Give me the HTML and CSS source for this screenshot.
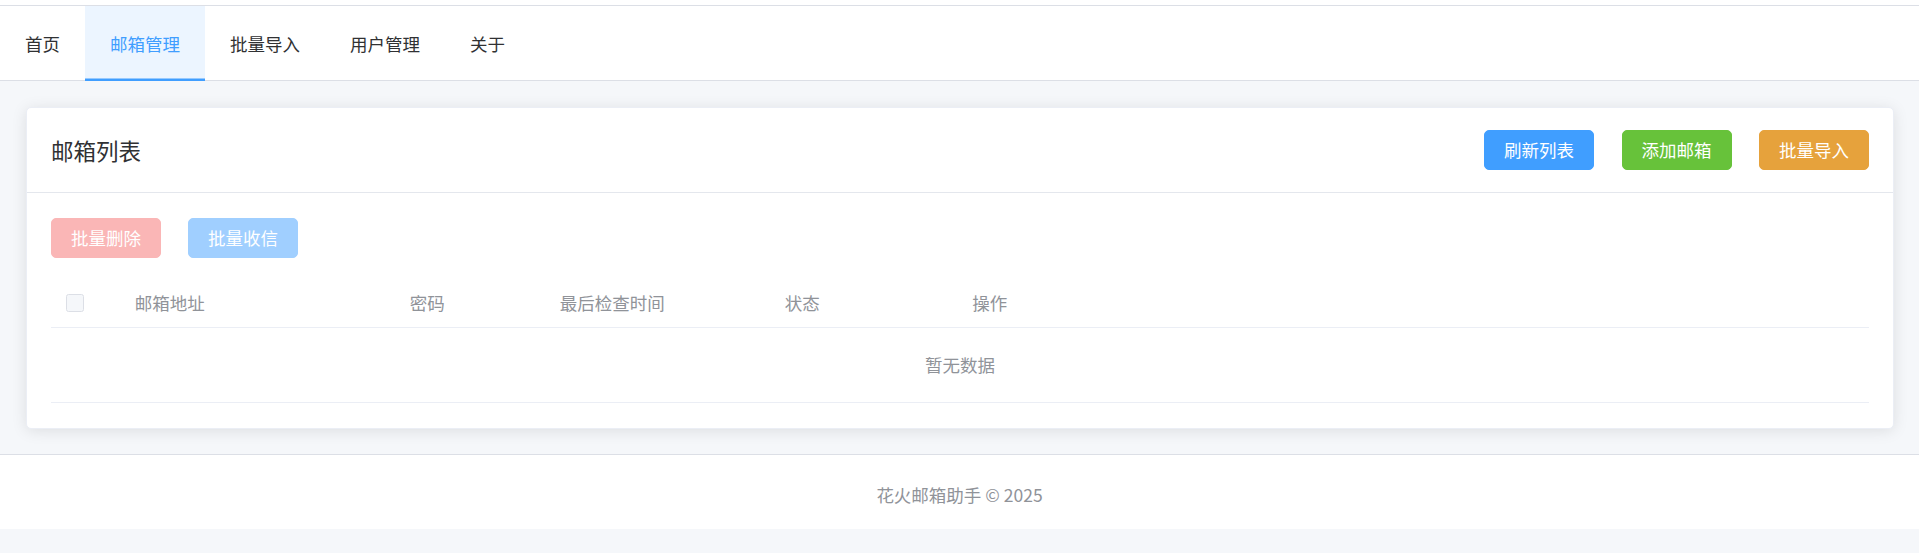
FILE: index.html
```html
<!DOCTYPE html>
<html lang="zh-CN">
<head>
<meta charset="utf-8">
<title>花火邮箱助手</title>
<link rel="stylesheet" href="styles.css">
</head>
<body>
<header class="topbar">
  <nav class="nav">
    <a class="nav-item">首页</a>
    <a class="nav-item active">邮箱管理</a>
    <a class="nav-item">批量导入</a>
    <a class="nav-item">用户管理</a>
    <a class="nav-item">关于</a>
  </nav>
</header>
<main class="main">
  <section class="card">
    <div class="card-header">
      <span class="card-title">邮箱列表</span>
      <div class="btn-group">
        <button class="btn btn-primary">刷新列表</button>
        <button class="btn btn-success">添加邮箱</button>
        <button class="btn btn-warning">批量导入</button>
      </div>
    </div>
    <div class="card-body">
      <div class="btn-group">
        <button class="btn btn-danger-disabled">批量删除</button>
        <button class="btn btn-primary-disabled">批量收信</button>
      </div>
      <div class="table">
        <div class="table-head">
          <div class="cell"><span class="checkbox"></span></div>
          <div class="cell">邮箱地址</div>
          <div class="cell">密码</div>
          <div class="cell">最后检查时间</div>
          <div class="cell">状态</div>
          <div class="cell">操作</div>
        </div>
        <div class="table-empty">暂无数据</div>
      </div>
    </div>
  </section>
</main>
<footer class="footer">花火邮箱助手 © 2025</footer>
</body>
</html>
```

FILE: styles.css
```css
html, body {
  margin: 0;
  padding: 0;
}
body {
  background: #f5f7fa;
  font-family: "Noto Sans CJK SC", "Microsoft YaHei", sans-serif;
  color: #303133;
}
.topbar {
  background: #fff;
  padding-top: 5px;
}
.nav {
  display: flex;
  height: 76px;
  box-sizing: border-box;
  border-top: 1px solid #dcdfe6;
  border-bottom: 1px solid #dcdfe6;
  background: #fff;
}
.nav-item {
  display: flex;
  align-items: center;
  height: 75px;
  margin-bottom: -1px;
  padding: 0 25px;
  font-size: 17.5px;
  line-height: 1;
  color: #303133;
  cursor: pointer;
}
.nav-item.active {
  color: #409eff;
  background: #ecf5ff;
  box-shadow: inset 0 -2.5px 0 #409eff;
}
.main {
  padding: 26px 25px 25px 26px;
}
.card {
  background: #fff;
  border: 1px solid #ebeef5;
  border-radius: 5px;
  box-shadow: 0 2px 15px rgba(0, 0, 0, 0.1);
}
.card-header {
  display: flex;
  justify-content: space-between;
  align-items: center;
  padding: 22px 24px 22px 24px;
  border-bottom: 1px solid #e4e7ed;
}
.card-title {
  font-size: 22.5px;
  line-height: 1;
  color: #303133;
}
.btn-group {
  display: flex;
  gap: 27.5px;
}
.btn-group .btn + .btn {
  margin-left: 0;
}
.card-body .btn-group {
  gap: 27px;
}
.btn {
  height: 40px;
  padding: 0 19px;
  border: 1px solid transparent;
  border-radius: 5px;
  font-family: inherit;
  font-size: 17.5px;
  line-height: 1;
  color: #fff;
  cursor: pointer;
}
.btn-primary { background: #409eff; border-color: #409eff; }
.btn-success { background: #67c23a; border-color: #67c23a; }
.btn-warning { background: #e6a23c; border-color: #e6a23c; }
.btn-danger-disabled { background: #fab6b6; border-color: #fab6b6; cursor: not-allowed; }
.btn-primary-disabled { background: #a0cfff; border-color: #a0cfff; cursor: not-allowed; }
.card-body {
  padding: 25px 24px 25px 24px;
}
.table {
  margin-top: 20px;
}
.table-head {
  display: grid;
  grid-template-columns: 68.75px 275px 150px 225px 187.5px 1fr;
  height: 50px;
  box-sizing: border-box;
  border-bottom: 1px solid #ebeef5;
  align-items: center;
}
.cell {
  padding: 0 15px;
  font-size: 17.5px;
  line-height: 1;
  color: #909399;
  display: flex;
  align-items: center;
}
.checkbox {
  display: inline-block;
  width: 18px;
  height: 18px;
  box-sizing: border-box;
  border: 1px solid #dcdfe6;
  border-radius: 2.5px;
  background: #f5f7fa;
}
.table-empty {
  display: flex;
  align-items: center;
  justify-content: center;
  height: 75px;
  box-sizing: border-box;
  border-bottom: 1px solid #ebeef5;
  font-size: 17.5px;
  line-height: 1;
  color: #909399;
}
.footer {
  display: flex;
  align-items: center;
  justify-content: center;
  height: 75px;
  box-sizing: border-box;
  padding-top: 5px;
  background: #fff;
  border-top: 1px solid #dcdfe6;
  font-size: 17.5px;
  line-height: 1;
  color: #909399;
}
```
